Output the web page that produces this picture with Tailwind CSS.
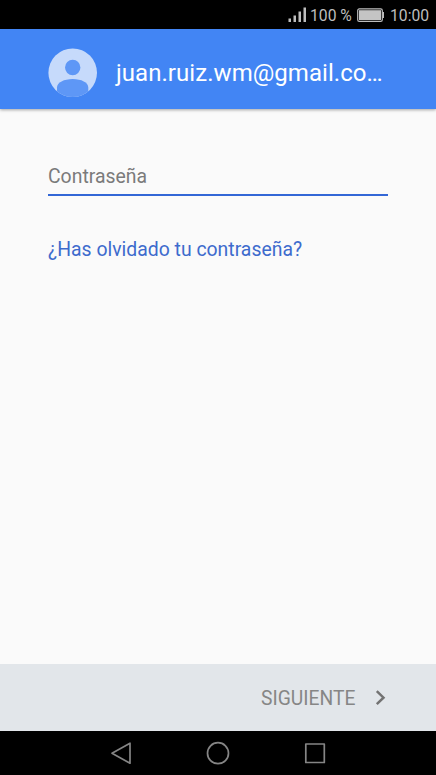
<!DOCTYPE html>
<html lang="es">
<head>
<meta charset="utf-8">
<title>Contraseña</title>
<script src="https://cdn.jsdelivr.net/npm/@tailwindcss/browser@4"></script>
</head>
<body class="flex h-[775px] w-[436px] flex-col overflow-hidden bg-[#fafafa] font-['Roboto','Noto_Sans',sans-serif]">
  <div class="flex h-[29px] shrink-0 items-center bg-black pl-[288px] pt-[2px] text-[15.700px] leading-none text-[#bdbdbd]">
    <svg class="-mt-[1px] h-[16px] w-[19px] shrink-0" viewBox="0 0 19 16" fill="#bdbdbd">
      <rect x="0.500" y="11.500" width="2.500" height="3.500"/><rect x="5.500" y="8.500" width="2.500" height="6.500"/><rect x="10.500" y="4.500" width="2.500" height="10.500"/><rect x="15.500" y="0.500" width="2.500" height="14.500"/>
    </svg>
    <span class="ml-[3px] w-[47px] shrink-0 whitespace-nowrap">100 %</span>
    <svg class="-mt-[2px] h-[14px] w-[28px] shrink-0" viewBox="0 0 28 14">
      <rect x="0.700" y="0.900" width="24.600" height="12.400" rx="1.600" fill="none" stroke="#bdbdbd" stroke-width="1.200"/>
      <rect x="2" y="2.200" width="22" height="9.800" fill="#c4c4c4"/>
      <path d="M25.500 4h1.500v6h-1.500z" fill="#bdbdbd"/>
    </svg>
    <span class="ml-[5px] shrink-0">10:00</span>
  </div>
  <header class="z-10 flex h-[80px] shrink-0 items-center bg-[#4285f4] pl-[48px] pt-[8px] shadow-[0_1px_3px_rgba(0,0,0,0.35)]">
    <svg class="h-[50px] w-[50px] shrink-0" viewBox="0 0 50 50">
      <defs><clipPath id="avatar"><circle cx="24.700" cy="24.800" r="24.300"/></clipPath></defs>
      <circle cx="24.700" cy="24.800" r="24.300" fill="#c6dafb"/>
      <circle cx="24.700" cy="19.500" r="7.700" fill="#5e97f6"/>
      <path clip-path="url(#avatar)" d="M9 50V39.500C9 34.500 16 31 24.700 31S40.300 34.500 40.300 39.500V50z" fill="#5e97f6"/>
    </svg>
    <h1 class="ml-[18px] whitespace-nowrap text-[24px] leading-[30px] tracking-[0.050px] text-white">juan.ruiz.wm@gmail.co…</h1>
  </header>
  <main class="flex grow flex-col items-start px-[48px] pt-[53px]">
    <div class="flex h-[34px] w-[340px] items-start border-b-[2px] border-[#3367d6] pt-[3px] text-[19.400px] leading-[24px] text-[#7b7b7b]">Contraseña</div>
    <a class="mt-[42px] whitespace-nowrap text-[19.400px] leading-[24px] text-[#3d6bcd]">¿Has olvidado tu contraseña?</a>
  </main>
  <footer class="flex h-[67px] shrink-0 items-center bg-[#e2e6ea] pl-[261px] text-[#868686]">
    <span class="w-[114px] pt-[2px] text-[19.300px] leading-[24px]">SIGUIENTE</span>
    <svg class="h-[16px] w-[12px]" viewBox="0 0 12 16" fill="none" stroke="#737373" stroke-width="2.500"><path d="M1.800 1.200L8.500 7.700L1.800 14.200"/></svg>
  </footer>
  <nav class="flex h-[44px] shrink-0 bg-black">
    <svg class="h-[44px] w-[436px]" viewBox="0 0 436 44" fill="none" stroke="#858585" stroke-width="1.700" stroke-linejoin="round">
      <path d="M112 22.200L130 12.200V32.200z"/><circle cx="218" cy="22.200" r="10.500"/><rect x="305.800" y="13" width="18.500" height="18.500"/>
    </svg>
  </nav>
</body>
</html>
